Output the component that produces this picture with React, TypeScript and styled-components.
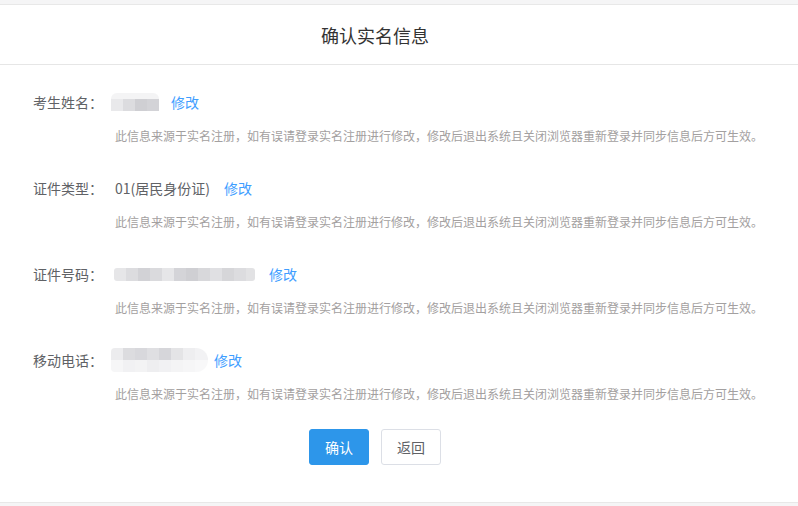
import React from "react";
import styled, { createGlobalStyle } from "styled-components";

const Global = createGlobalStyle`
  html, body { margin: 0; padding: 0; }
  body {
    background: #f5f5f6;
    font-family: "Microsoft YaHei", "Noto Sans CJK SC", sans-serif;
    -webkit-font-smoothing: antialiased;
  }
`;

const Page = styled.div`
  padding-top: 4px;
  width: 798px;
  height: 506px;
  box-sizing: border-box;
`;

const Panel = styled.div`
  background: #fff;
  border-top: 1px solid #e8e8e8;
  border-bottom: 1px solid #e8e8e8;
  height: 499px;
  box-sizing: border-box;
  display: flex;
  flex-direction: column;
`;

const Header = styled.div`
  height: 59px;
  border-bottom: 1px solid #e6e6e6;
  display: flex;
  align-items: center;
  justify-content: center;
  padding-right: 48px;
  font-size: 18px;
  color: #333;
  box-sizing: content-box;
`;

const Form = styled.div`
  padding: 27px 0 0 33px;
  display: flex;
  flex-direction: column;
  gap: 32px;
`;

const Item = styled.div`
  display: flex;
  flex-direction: column;
  gap: 14px;
`;

const Row = styled.div`
  display: flex;
  align-items: center;
  height: 20px;
  font-size: 14px;
  line-height: 20px;
`;

const Label = styled.span`
  width: 82px;
  flex: none;
  color: #606266;
`;

const Value = styled.span`
  color: #606266;
`;

const Link = styled.a<{ $gap: number }>`
  margin-left: ${(p) => p.$gap}px;
  color: #409eff;
  cursor: pointer;
`;

const Hint = styled.div`
  padding-left: 82px;
  font-size: 12px;
  line-height: 20px;
  color: #a3a0a0;
  white-space: nowrap;
`;

const Mosaic = styled.span<{ $w: number; $h: number; $bg: string; $radius?: string; $shift?: number }>`
  display: inline-block;
  width: ${(p) => p.$w}px;
  height: ${(p) => p.$h}px;
  background: ${(p) => p.$bg};
  border-radius: ${(p) => p.$radius || "0"};
  margin-left: ${(p) => p.$shift ?? 0}px;
  flex: none;
`;

const Actions = styled.div`
  display: flex;
  justify-content: center;
  gap: 12px;
  padding-right: 48px;
  margin-top: 25px;
`;

const Button = styled.button<{ $primary?: boolean }>`
  width: 60px;
  height: 36px;
  border-radius: 3px;
  font-family: inherit;
  font-size: 14px;
  cursor: pointer;
  border: 1px solid ${(p) => (p.$primary ? "#2d96ea" : "#dcdfe6")};
  background: ${(p) => (p.$primary ? "#2d96ea" : "#fff")};
  color: ${(p) => (p.$primary ? "#fff" : "#606266")};
  padding: 0;
`;

const HINT =
  "此信息来源于实名注册，如有误请登录实名注册进行修改，修改后退出系统且关闭浏览器重新登录并同步信息后方可生效。";

const cells = (colors: string[], size: number) =>
  `linear-gradient(90deg, ${colors
    .map((c, i) => `${c} ${i * size}px, ${c} ${(i + 1) * size}px`)
    .join(", ")})`;

const nameBg = `${cells(["#e9e9eb", "#dcdcdf", "#cfcfd3", "#d3d3d7"], 12)} 0 6px / 100% 12px no-repeat, linear-gradient(#f4f4f5, #f4f4f5) 0 0 / 100% 6px no-repeat`;

const idBg = cells(
  ["#e6e6e8", "#dcdcdf", "#d2d2d6", "#dadadd", "#e6e6e8", "#d4d4d8", "#cfcfd3", "#d8d8db", "#e0e0e3", "#d6d6d9", "#dcdcdf", "#e2e2e4"],
  12
);

const phoneBg = `${cells(["#ececee", "#dcdcdf", "#d8d8dc", "#dfdfe2", "#d6d6da", "#e4e4e6", "#eeeef0", "#f2f2f4"], 12)} 0 0 / 100% 12px no-repeat, ${cells(["#f6f6f7", "#f1f1f3", "#f3f3f4", "#eeeef0", "#f1f1f3", "#f4f4f5", "#f6f6f7", "#f8f8f9"], 12)} 0 12px / 100% 12px no-repeat`;

export default function App() {
  return (
    <>
      <Global />
      <Page>
        <Panel>
          <Header>确认实名信息</Header>
          <Form>
            <Item>
              <Row>
                <Label>考生姓名：</Label>
                <Mosaic $w={48} $h={18} $bg={nameBg} $shift={-4} $radius="6px 6px 0 0" />
                <Link $gap={12}>修改</Link>
              </Row>
              <Hint>{HINT}</Hint>
            </Item>
            <Item>
              <Row>
                <Label>证件类型：</Label>
                <Value>01(居民身份证)</Value>
                <Link $gap={14}>修改</Link>
              </Row>
              <Hint>{HINT}</Hint>
            </Item>
            <Item>
              <Row>
                <Label>证件号码：</Label>
                <Mosaic $w={141} $h={13} $bg={idBg} $shift={-1} $radius="3px" />
                <Link $gap={14}>修改</Link>
              </Row>
              <Hint>{HINT}</Hint>
            </Item>
            <Item>
              <Row>
                <Label>移动电话：</Label>
                <Mosaic $w={97} $h={24} $bg={phoneBg} $shift={-4} $radius="4px 12px 12px 4px" />
                <Link $gap={6}>修改</Link>
              </Row>
              <Hint>{HINT}</Hint>
            </Item>
          </Form>
          <Actions>
            <Button $primary>确认</Button>
            <Button>返回</Button>
          </Actions>
        </Panel>
      </Page>
    </>
  );
}
